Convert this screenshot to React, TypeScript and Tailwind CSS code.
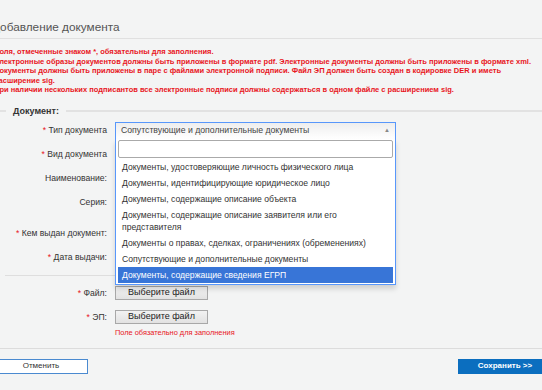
import React from "react";

const options: { text: React.ReactNode; active?: boolean }[] = [
  { text: "Документы, удостоверяющие личность физического лица" },
  { text: "Документы, идентифицирующие юридическое лицо" },
  { text: "Документы, содержащие описание объекта" },
  {
    text: (
      <>
        Документы, содержащие описание заявителя или его
        <br />
        представителя
      </>
    ),
  },
  { text: "Документы о правах, сделках, ограничениях (обременениях)" },
  { text: "Сопутствующие и дополнительные документы" },
  { text: "Документы, содержащие сведения ЕГРП", active: true },
];

function Label({ req, children }: { req?: boolean; children: React.ReactNode }) {
  return (
    <div className="w-[113px] shrink-0 text-right text-[8.6px] leading-[20px] text-[#333] whitespace-nowrap">
      {req && <span className="text-[#e8161d]">* </span>}
      {children}
    </div>
  );
}

function HiddenInput() {
  return <div className="ml-[8px] w-[281px] h-[18px] bg-white border border-[#ccc]" />;
}

function FileButton() {
  return (
    <div className="ml-[8px] w-[93px] h-[14px] flex items-center justify-center bg-gradient-to-b from-[#f2f2f2] to-[#e2e2e2] border border-[#a8a8a8] text-[9px] text-[#222]">
      Выберите файл
    </div>
  );
}

export default function App() {
  return (
    <div className="w-[542px] h-[390px] overflow-hidden bg-[#f3f4f4] font-['Liberation_Sans',Arial,sans-serif]">
      <div className="relative w-[558px] -ml-[6px]">
        <div className="pt-[18px] pb-[2px] border-b border-[#e0e0e0]">
          <h1 className="-ml-[2px] text-[11.8px] leading-[18px] text-[#555] whitespace-nowrap">
            Добавление документа
          </h1>
        </div>

        <div className="mt-[8px] text-[7.5px] leading-[9.6px] font-bold text-[#e8161d] whitespace-nowrap">
          <div>Поля, отмеченные знаком *, обязательны для заполнения.</div>
          <div>
            Электронные образы документов должны быть приложены в формате pdf. Электронные документы должны быть приложены в формате xml.
          </div>
          <div>
            Документы должны быть приложены в паре с файлами электронной подписи. Файл ЭП должен быть создан в кодировке DER и иметь
          </div>
          <div>расширение sig.</div>
          <div>
            При наличии нескольких подписантов все электронные подписи должны содержаться в одном файле с расширением sig.
          </div>
        </div>

        <div className="mt-[10px] h-[12px] flex items-center">
          <div className="w-[12px] h-[2px] bg-[#e2e2e2]" />
          <span className="px-[7px] text-[9px] font-bold text-[#333] leading-[12px]">Документ:</span>
          <div className="flex-1 h-[2px] bg-[#e2e2e2]" />
        </div>

        {/* Row 1: select */}
        <div className="mt-[3px] flex items-start h-[20px]">
          <Label req>Тип документа</Label>
          <div className="relative ml-[8px] mt-[2px] w-[281px] h-[17px] z-10">
            <div className="h-[17px] flex items-center justify-between pl-[5px] pr-[5px] border border-b-0 border-[#5897fb] bg-gradient-to-b from-[#eee] to-white text-[8.7px] text-[#444]">
              <span>Сопутствующие и дополнительные документы</span>
              <span className="text-[6px] text-[#888]">▲</span>
            </div>
            <div className="absolute left-0 top-full w-[281px] bg-white border border-t-0 border-[#5897fb] shadow-[0_4px_5px_rgba(0,0,0,0.15)] px-[2px] pt-[1px] pb-[1px]">
              <div className="h-[18px] bg-white border border-[#aaa] rounded-[2px]" />
              <ul className="mt-[1px]">
                {options.map((o, i) => (
                  <li
                    key={i}
                    className={
                      "pl-[4px] py-[2px] text-[8.6px] leading-[12px] " +
                      (o.active ? "bg-[#3875d7] text-white" : "text-[#333]")
                    }
                  >
                    {o.text}
                  </li>
                ))}
              </ul>
            </div>
          </div>
        </div>

        <div className="mt-[4px] flex items-center h-[20px]">
          <Label req>Вид документа</Label>
          <HiddenInput />
        </div>
        <div className="mt-[4px] flex items-center h-[20px]">
          <Label>Наименование:</Label>
          <HiddenInput />
        </div>
        <div className="mt-[4px] flex items-center h-[20px]">
          <Label>Серия:</Label>
          <HiddenInput />
        </div>
        <div className="mt-[11px] flex items-center h-[20px]">
          <Label req>Кем выдан документ:</Label>
          <HiddenInput />
        </div>
        <div className="mt-[4px] flex items-center h-[20px]">
          <Label req>Дата выдачи:</Label>
          <HiddenInput />
        </div>

        <div className="mt-[8px] ml-[11px] w-[360px] h-px bg-[#dedede]" />

        <div className="mt-[10px] flex items-center h-[14px]">
          <Label req>Файл:</Label>
          <FileButton />
        </div>
        <div className="mt-[10px] flex items-center h-[14px]">
          <Label req>ЭП:</Label>
          <FileButton />
        </div>
        <div className="mt-[4px] ml-[121px] text-[7.4px] leading-[10px] text-[#e8161d]">
          Поле обязательно для заполнения
        </div>

        <div className="mt-[10px] h-px bg-[#dcdcdc]" />

        <div className="mt-[10px] flex justify-between">
          <div className="w-[94px] h-[15px] flex items-center justify-center bg-white border border-[#4a8ad0] text-[8px] text-[#333]">
            Отменить
          </div>
          <div className="w-[94px] h-[15px] flex items-center justify-center bg-[#0b6ebf] text-[8px] font-bold text-white">
            Сохранить &gt;&gt;
          </div>
        </div>
      </div>
    </div>
  );
}
